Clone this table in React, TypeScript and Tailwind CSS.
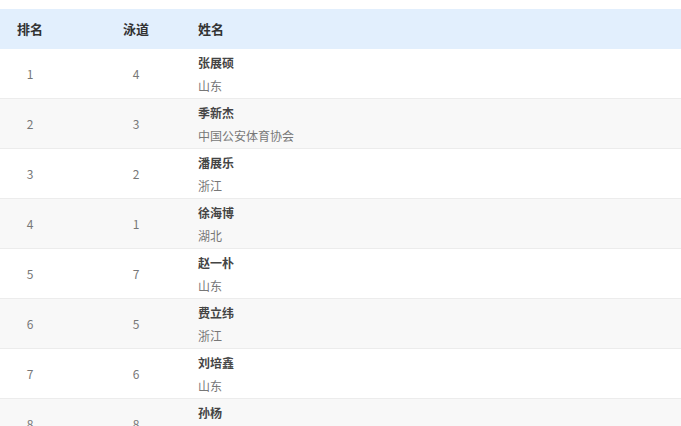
const rows = [
  { rank: '1', lane: '4', name: '张展硕', team: '山东' },
  { rank: '2', lane: '3', name: '季新杰', team: '中国公安体育协会' },
  { rank: '3', lane: '2', name: '潘展乐', team: '浙江' },
  { rank: '4', lane: '1', name: '徐海博', team: '湖北' },
  { rank: '5', lane: '7', name: '赵一朴', team: '山东' },
  { rank: '6', lane: '5', name: '费立纬', team: '浙江' },
  { rank: '7', lane: '6', name: '刘培鑫', team: '山东' },
  { rank: '8', lane: '8', name: '孙杨', team: '浙江' },
];

const font = { fontFamily: '"Noto Sans CJK SC", "Liberation Sans", sans-serif' };

export default function App() {
  return (
    <div className="w-[681px] h-[426px] overflow-hidden bg-white pt-[9px]" style={font}>
      <div className="flex h-[40px] items-center bg-[#e2effd] text-[13px] font-bold text-[#333]">
        <div className="w-[60px] text-center">排名</div>
        <div className="w-[138px] pl-[14px] text-center">泳道</div>
        <div className="flex-1">姓名</div>
      </div>
      {rows.map((r, i) => (
        <div
          key={r.rank}
          className={`flex h-[50px] items-center border-b border-[#ececec] text-[12px] ${i % 2 === 1 ? 'bg-[#f8f8f8]' : 'bg-white'}`}
        >
          <div className="w-[60px] text-center text-[#777]">{r.rank}</div>
          <div className="w-[138px] pl-[14px] text-center text-[#777]">{r.lane}</div>
          <div className="flex-1 flex flex-col leading-[23px]">
            <span className="font-bold text-[#444]">{r.name}</span>
            <span className="text-[#777]">{r.team}</span>
          </div>
        </div>
      ))}
    </div>
  );
}
